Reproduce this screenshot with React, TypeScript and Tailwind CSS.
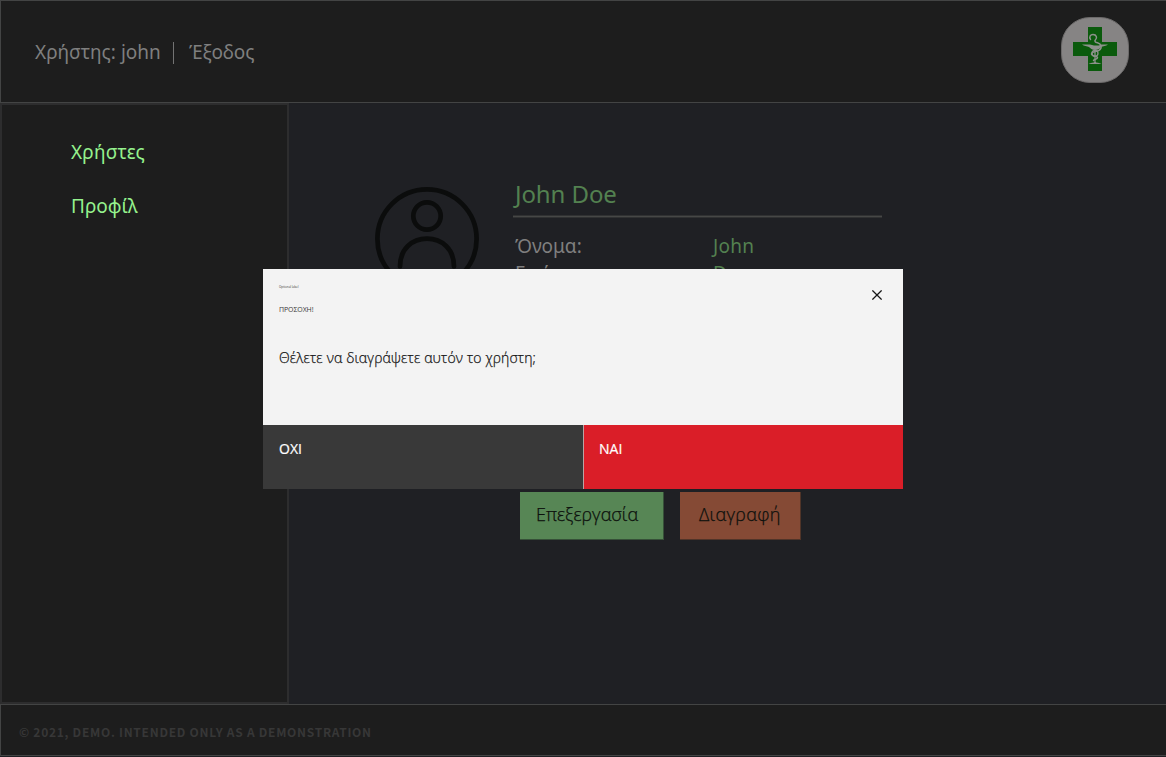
import React from "react";

const NOTO = "font-['Noto_Sans','Open_Sans',sans-serif]";

function PharmacyLogo() {
  return (
    <div className="flex h-[66px] w-[68px] items-center justify-center rounded-[29px] border border-[#6c6a6a] bg-[#868484] pb-[2px]">
      <svg width="44" height="44" viewBox="0 0 44 44" fill="none">
        <path d="M15 0h14v15h15v14H29v15H15V29H0V15h15z" fill="#0a5a0c" />
        <g stroke="#8d918c" strokeLinecap="round">
          <path d="M17.500 12.500C15.800 9.500 17.500 7.500 20 7.500C23.500 7.500 24.500 11 22.500 12.800C21 14.500 22.500 15.200 24.500 15.800C28.500 17 29.500 21 26 23.300C23 25 18.500 24.500 18.500 27C18.500 29.500 24.500 28.500 24.500 30.800C24.500 32.500 21 32 20.500 33.500" strokeWidth="1.500" />
          <path d="M22 24v12" strokeWidth="1.300" />
          <circle cx="22" cy="26.300" r="3" strokeWidth="1.300" />
        </g>
        <path d="M9 17.500h8l4 1h5l2-1h7c-2 1.600-5 1.500-7 2.600-1.500 1.700-3 3-6 3s-4.500-1.500-6-3c-2-1.200-5-1-7-2.600z" fill="#8d918c" />
        <path d="M15.500 37c2-1.500 5-.8 6.500-2.200 1.500 1.400 4.500.7 6.500 2.200z" fill="#8d918c" />
      </svg>
    </div>
  );
}

function Avatar() {
  return (
    <svg className="h-[104px] w-[104px] shrink-0" viewBox="0 0 104 104" fill="none" stroke="#0b0c0c" strokeWidth="4.700" strokeLinecap="round">
      <circle cx="52" cy="52" r="49.600" />
      <circle cx="52" cy="29" r="13.700" />
      <path d="M25 79.500C25 62 37 51.700 52 51.700S79 62 79 79.500" />
    </svg>
  );
}

function Field({ label, value }: { label: string; value: string }) {
  return (
    <div className="flex h-[27px] text-[19px] leading-[27px]">
      <span className="w-[198px] text-[#7f7f7f]">{label}</span>
      <span className="tracking-[0.3px] text-[#538150]">{value}</span>
    </div>
  );
}

function ConfirmDialog() {
  return (
    <div role="dialog" className="absolute left-[263px] top-[269px] flex h-[220px] w-[640px] flex-col bg-[#f3f3f3] font-['Open_Sans','Noto_Sans',sans-serif]">
      <div className="flex h-[156px] justify-between pl-4 pr-[21px]">
        <div className="flex flex-col pt-4 text-[#393939]">
          <span className="h-1 text-[3px] leading-[4px]">Optional label</span>
          <h2 className="mt-[17px] h-2 text-[7px] leading-[8px] tracking-[-0.1px]">ΠΡΟΣΟΧΗ!</h2>
          <p className="mt-[34px] whitespace-nowrap text-[14px] font-light leading-5 tracking-[0.14px] text-[#161616] [-webkit-text-stroke:0.25px_#161616]">Θέλετε να διαγράψετε αυτόν το χρήστη;</p>
        </div>
        <button aria-label="Close" className="mt-[21px] h-[10px] w-[10px]">
          <svg className="block" width="10" height="10" viewBox="0 0 10 10" stroke="#161616" strokeWidth="1.250">
            <path d="M.4.4l9.200 9.200M9.600.4L.4 9.600" />
          </svg>
        </button>
      </div>
      <div className="flex h-16 text-[14px] leading-[18px] text-white [-webkit-text-stroke:0.2px_#fff]">
        <button className="flex w-[320px] items-start bg-[#393939] pl-4 pt-[15px]">ΟΧΙ</button>
        <button className="flex w-[320px] items-start border-l border-[#b8a4a4] bg-[#da1e28] pl-[15px] pt-[15px]">ΝΑΙ</button>
      </div>
    </div>
  );
}

export default function App() {
  return (
    <div className={`relative flex h-[757px] w-[1166px] flex-col overflow-hidden bg-[#1f2024] ${NOTO}`}>
      <header className="flex h-[103px] shrink-0 justify-between border-y border-l border-[#434444] bg-[#1d1d1d] pl-[34px] pr-[37px] text-[19px] text-[#7f7f7f]">
        <div className="mt-[38px] flex h-[27px] leading-[27px]">
          <span className="w-[126px] whitespace-nowrap">Χρήστης: john</span>
          <span className="ml-3 mt-[3px] h-[22px] w-px bg-[#737373]" />
          <span className="ml-[15px] whitespace-nowrap tracking-[-0.15px]">Έξοδος</span>
        </div>
        <div className="pt-4">
          <PharmacyLogo />
        </div>
      </header>
      <div className="flex h-[601px] shrink-0">
        <nav className="flex w-[289px] flex-col border-2 border-[#2d2d2e] bg-[#1d1d1d] pl-[69px] pt-[34px] text-[19px] leading-[27px] text-[#95f28d]">
          <a className="tracking-[0.2px]">Χρήστες</a>
          <a className="mt-[27px]">Προφίλ</a>
        </nav>
        <main className="flex flex-1 pl-[86px] pt-[84px]">
          <Avatar />
          <div className="ml-[34px] w-[369px]">
            <h1 className="-mt-[10px] h-[35px] pl-[2px] text-[24px] leading-[34px] tracking-[-0.1px] text-[#538150]">John Doe</h1>
            <div className="mt-[3px] h-[3px] border-y border-[#303132] bg-[#464746]" />
            <div className="mt-[15px] pl-[2px]">
              <Field label="Όνομα:" value="John" />
              <Field label="Επώνυμο:" value="Doe" />
            </div>
            <div className="ml-[7px] mt-[205px] flex font-['Open_Sans','Noto_Sans',sans-serif] text-[18px] font-light leading-[45px] text-[#0c100c] [-webkit-text-stroke:0.25px_#0c100c]">
              <button className="flex h-[48px] w-[144px] shrink-0 items-start border-b border-r border-[#365038] bg-[#578655] pl-4">Επεξεργασία</button>
              <button className="ml-4 flex h-[48px] w-[121px] shrink-0 items-start border-b border-r border-[#503428] bg-[#854a35] pl-[19px] tracking-[0.32px]">Διαγραφή</button>
            </div>
          </div>
        </main>
      </div>
      <footer className="h-[52px] shrink-0 border-y border-l border-[#434444] bg-[#1d1d1d] pl-[18px] pt-[18px] font-['Noto_Sans_CJK_JP',sans-serif] text-[12px] font-bold leading-[18px] tracking-[0.72px] text-[#373737]">
        © 2021, DEMO. INTENDED ONLY AS A DEMONSTRATION
      </footer>
      <ConfirmDialog />
    </div>
  );
}
